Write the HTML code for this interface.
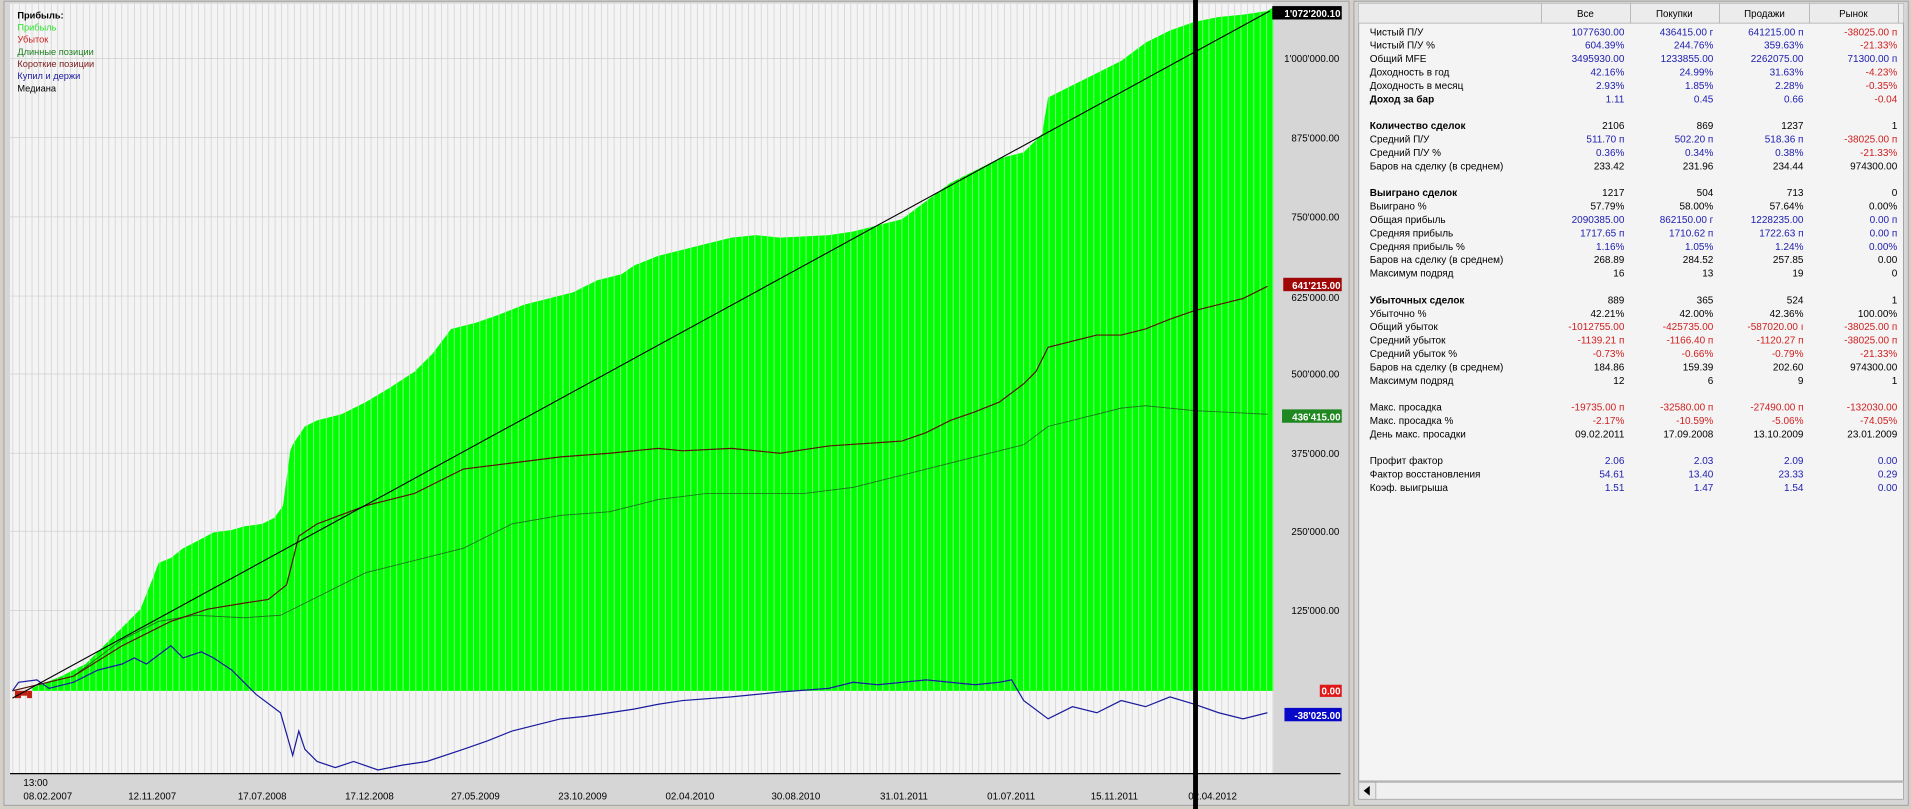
<!DOCTYPE html>
<html><head><meta charset="utf-8"><style>
html,body{margin:0;padding:0;background:#d4d0c8;overflow:hidden}
svg{display:block}
text{font-family:"Liberation Sans","DejaVu Sans",sans-serif}
</style></head><body>
<svg width="1911" height="809" viewBox="0 0 1568 664" xmlns="http://www.w3.org/2000/svg">
<defs>
<pattern id="gv" x="10" y="0" width="5.25" height="10" patternUnits="userSpaceOnUse"><rect x="0" y="0" width="0.6" height="10" fill="#d0d0d0"/></pattern>
<pattern id="wv" x="10" y="0" width="5.25" height="10" patternUnits="userSpaceOnUse"><rect x="0" y="0" width="0.6" height="10" fill="#b0ffb0"/></pattern>
<clipPath id="pc"><rect x="8" y="3" width="1037" height="632"/></clipPath>
</defs>
<rect x="0" y="0" width="1568" height="664" fill="#d4d0c8"/>
<rect x="3" y="1" width="1104" height="660" fill="#d6d6d6" stroke="#a0a0a0" stroke-width="0.8"/>
<rect x="8" y="3" width="1037" height="632" fill="#f4f4f4"/>
<rect x="8" y="3" width="1037" height="632" fill="url(#gv)"/>
<g stroke="#d0d0d0" stroke-width="0.6">
<line x1="8" y1="48" x2="1045" y2="48"/><line x1="8" y1="113" x2="1045" y2="113"/><line x1="8" y1="178" x2="1045" y2="178"/><line x1="8" y1="243" x2="1045" y2="243"/><line x1="8" y1="307" x2="1045" y2="307"/><line x1="8" y1="372" x2="1045" y2="372"/><line x1="8" y1="436" x2="1045" y2="436"/><line x1="8" y1="501" x2="1045" y2="501"/>
</g>
<g clip-path="url(#pc)">
<polygon fill="#00ff00" points="26,567 26,565 30,563 50,555 70,545 85,530 100,515 115,500 125,475 130,462 140,458 150,450 160,445 175,437 190,435 200,432 215,430 225,425 232,415 238,370 240,365 250,350 260,345 280,340 300,330 320,318 340,305 355,290 370,270 390,265 410,258 430,250 450,245 470,240 490,230 510,225 520,218 540,210 560,205 580,200 600,195 620,193 640,195 660,194 680,193 700,190 720,185 740,180 760,165 780,150 800,140 820,130 840,125 855,110 860,80 880,70 900,60 920,50 940,35 960,25 980,18 1000,14 1020,12 1040,9 1045,6 1045,567"/>
<polygon fill="url(#wv)" points="26,567 26,565 30,563 50,555 70,545 85,530 100,515 115,500 125,475 130,462 140,458 150,450 160,445 175,437 190,435 200,432 215,430 225,425 232,415 238,370 240,365 250,350 260,345 280,340 300,330 320,318 340,305 355,290 370,270 390,265 410,258 430,250 450,245 470,240 490,230 510,225 520,218 540,210 560,205 580,200 600,195 620,193 640,195 660,194 680,193 700,190 720,185 740,180 760,165 780,150 800,140 820,130 840,125 855,110 860,80 880,70 900,60 920,50 940,35 960,25 980,18 1000,14 1020,12 1040,9 1045,6 1045,567"/>
<rect x="12" y="567" width="5" height="6" fill="#c02010"/><rect x="17" y="567" width="5" height="4" fill="#c02010"/><rect x="22" y="567" width="4" height="6" fill="#c02010"/>
<polyline fill="none" stroke="#1f7a1f" stroke-width="0.8" points="10,567 60,555 100,525 130,510 160,505 200,507 230,505 260,490 300,470 340,460 380,450 400,440 420,430 460,423 500,420 540,410 580,405 620,405 660,405 700,400 740,390 780,380 800,375 840,365 860,350 880,345 900,340 920,335 940,333 980,337 1000,338 1040,340"/>
<polyline fill="none" stroke="#5a1408" stroke-width="1" points="10,567 60,555 100,530 120,520 140,510 170,500 200,495 220,492 235,480 245,440 260,430 300,415 340,405 360,395 380,385 420,380 460,375 500,372 540,368 560,370 600,368 640,372 680,366 740,362 760,355 780,345 800,338 820,330 840,315 850,305 860,285 880,280 900,275 920,275 940,270 960,262 980,255 1000,250 1020,245 1040,235"/>
<polyline fill="none" stroke="#1a1aa0" stroke-width="1" points="10,567 15,560 30,558 40,565 60,560 80,550 100,545 110,540 120,545 140,530 150,540 165,535 175,540 190,550 200,560 210,570 230,585 240,620 245,600 250,615 260,625 275,630 290,625 310,632 330,628 350,625 380,615 400,608 420,600 440,595 460,590 480,588 500,585 520,582 540,578 560,575 600,572 640,568 680,565 700,560 720,562 760,558 800,562 820,560 830,558 840,575 860,590 880,580 900,585 920,575 940,580 960,572 980,578 1000,585 1020,590 1040,585"/>
<line x1="10" y1="573" x2="1042" y2="9" stroke="#000" stroke-width="0.9"/>
</g>
<line x1="8" y1="635" x2="1100" y2="635" stroke="#000" stroke-width="1"/>
<rect x="979" y="0" width="4" height="664" fill="#000"/>
<g font-size="7.6">
<text x="14" y="15" font-weight="bold" fill="#000">Прибыль:</text>
<text x="14" y="25" fill="#30e030">Прибыль</text>
<text x="14" y="35" fill="#d02020">Убыток</text>
<text x="14" y="45" fill="#208020">Длинные позиции</text>
<text x="14" y="55" fill="#802020">Короткие позиции</text>
<text x="14" y="65" fill="#2020a0">Купил и держи</text>
<text x="14" y="75" fill="#000">Медиана</text>
</g>
<g font-size="8" fill="#000" text-anchor="end">
<text x="1099" y="51">1'000'000.00</text>
<text x="1099" y="116">875'000.00</text>
<text x="1099" y="181">750'000.00</text>
<text x="1099" y="247">625'000.00</text>
<text x="1099" y="310">500'000.00</text>
<text x="1099" y="375">375'000.00</text>
<text x="1099" y="439">250'000.00</text>
<text x="1099" y="504">125'000.00</text>
</g>
<rect x="1044" y="5" width="57" height="11" fill="#000"/>
<rect x="1053" y="228" width="48" height="11" fill="#a00808"/>
<rect x="1052" y="336" width="49" height="11" fill="#208820"/>
<rect x="1083" y="562" width="18" height="10" fill="#e01818"/>
<rect x="1054" y="581" width="47" height="11" fill="#0808c8"/>
<g font-size="8" fill="#fff" text-anchor="end" font-weight="bold">
<text x="1100" y="14">1'072'200.10</text>
<text x="1100" y="237">641'215.00</text>
<text x="1100" y="345">436'415.00</text>
<text x="1100" y="570">0.00</text>
<text x="1100" y="590">-38'025.00</text>
</g>
<g font-size="8" fill="#000">
<text x="19" y="645">13:00</text>
<text x="19" y="656">08.02.2007</text>
<text x="105" y="656">12.11.2007</text>
<text x="195" y="656">17.07.2008</text>
<text x="283" y="656">17.12.2008</text>
<text x="370" y="656">27.05.2009</text>
<text x="458" y="656">23.10.2009</text>
<text x="546" y="656">02.04.2010</text>
<text x="633" y="656">30.08.2010</text>
<text x="722" y="656">31.01.2011</text>
<text x="810" y="656">01.07.2011</text>
<text x="895" y="656">15.11.2011</text>
<text x="975" y="656">02.04.2012</text>
</g>
<rect x="1111" y="1" width="455" height="660" fill="#d6d6d6" stroke="#a0a0a0" stroke-width="0.8"/>
<rect x="1115" y="3" width="447" height="638" fill="#f4f4f4" stroke="#909090" stroke-width="0.6"/>
<rect x="1115" y="3" width="447" height="16" fill="#ececec"/>
<g stroke="#a8a8a8" stroke-width="0.6">
<line x1="1115" y1="19" x2="1562" y2="19"/>
<line x1="1265" y1="3" x2="1265" y2="19"/><line x1="1338" y1="3" x2="1338" y2="19"/><line x1="1411" y1="3" x2="1411" y2="19"/><line x1="1485" y1="3" x2="1485" y2="19"/><line x1="1558" y1="3" x2="1558" y2="19"/>
</g>
<g font-size="8" fill="#000" text-anchor="middle">
<text x="1301" y="14">Все</text><text x="1374" y="14">Покупки</text><text x="1448" y="14">Продажи</text><text x="1521" y="14">Рынок</text>
</g>
<rect x="1115" y="642" width="447" height="14" fill="#f0f0f0" stroke="#a0a0a0" stroke-width="0.6"/>
<rect x="1115" y="642" width="14" height="14" fill="#e8e8e8" stroke="#a0a0a0" stroke-width="0.6"/>
<polygon points="1119,649 1124,645 1124,653" fill="#000"/>
<g font-size="8.2" fill="#000">
<text x="1124" y="29">Чистый П/У</text>
<text x="1124" y="40">Чистый П/У %</text>
<text x="1124" y="51">Общий MFE</text>
<text x="1124" y="62">Доходность в год</text>
<text x="1124" y="73">Доходность в месяц</text>
<text x="1124" y="84" font-weight="bold">Доход за бар</text>
<text x="1124" y="106" font-weight="bold">Количество сделок</text>
<text x="1124" y="117">Средний П/У</text>
<text x="1124" y="128">Средний П/У %</text>
<text x="1124" y="139">Баров на сделку (в среднем)</text>
<text x="1124" y="161" font-weight="bold">Выиграно сделок</text>
<text x="1124" y="172">Выиграно %</text>
<text x="1124" y="183">Общая прибыль</text>
<text x="1124" y="194">Средняя прибыль</text>
<text x="1124" y="205">Средняя прибыль %</text>
<text x="1124" y="216">Баров на сделку (в среднем)</text>
<text x="1124" y="227">Максимум подряд</text>
<text x="1124" y="249" font-weight="bold">Убыточных сделок</text>
<text x="1124" y="260">Убыточно %</text>
<text x="1124" y="271">Общий убыток</text>
<text x="1124" y="282">Средний убыток</text>
<text x="1124" y="293">Средний убыток %</text>
<text x="1124" y="304">Баров на сделку (в среднем)</text>
<text x="1124" y="315">Максимум подряд</text>
<text x="1124" y="337">Макс. просадка</text>
<text x="1124" y="348">Макс. просадка %</text>
<text x="1124" y="359">День макс. просадки</text>
<text x="1124" y="381">Профит фактор</text>
<text x="1124" y="392">Фактор восстановления</text>
<text x="1124" y="403">Коэф. выигрыша</text>
</g>
<g font-size="8.2" text-anchor="end">
<g fill="#2020b0">
<text x="1333" y="29">1077630.00</text><text x="1333" y="40">604.39%</text><text x="1333" y="51">3495930.00</text><text x="1333" y="62">42.16%</text><text x="1333" y="73">2.93%</text><text x="1333" y="84">1.11</text>
<text x="1333" y="117">511.70 п</text><text x="1333" y="128">0.36%</text>
<text x="1333" y="183">2090385.00</text><text x="1333" y="194">1717.65 п</text><text x="1333" y="205">1.16%</text>
<text x="1333" y="381">2.06</text><text x="1333" y="392">54.61</text><text x="1333" y="403">1.51</text>
<text x="1406" y="29">436415.00 г</text><text x="1406" y="40">244.76%</text><text x="1406" y="51">1233855.00</text><text x="1406" y="62">24.99%</text><text x="1406" y="73">1.85%</text><text x="1406" y="84">0.45</text>
<text x="1406" y="117">502.20 п</text><text x="1406" y="128">0.34%</text>
<text x="1406" y="183">862150.00 г</text><text x="1406" y="194">1710.62 п</text><text x="1406" y="205">1.05%</text>
<text x="1406" y="381">2.03</text><text x="1406" y="392">13.40</text><text x="1406" y="403">1.47</text>
<text x="1480" y="29">641215.00 п</text><text x="1480" y="40">359.63%</text><text x="1480" y="51">2262075.00</text><text x="1480" y="62">31.63%</text><text x="1480" y="73">2.28%</text><text x="1480" y="84">0.66</text>
<text x="1480" y="117">518.36 п</text><text x="1480" y="128">0.38%</text>
<text x="1480" y="183">1228235.00</text><text x="1480" y="194">1722.63 п</text><text x="1480" y="205">1.24%</text>
<text x="1480" y="381">2.09</text><text x="1480" y="392">23.33</text><text x="1480" y="403">1.54</text>
<text x="1557" y="51">71300.00 п</text>
<text x="1557" y="183">0.00 п</text><text x="1557" y="194">0.00 п</text><text x="1557" y="205">0.00%</text>
<text x="1557" y="381">0.00</text><text x="1557" y="392">0.29</text><text x="1557" y="403">0.00</text>
</g>
<g fill="#000">
<text x="1333" y="106">2106</text><text x="1333" y="139">233.42</text><text x="1333" y="161">1217</text><text x="1333" y="172">57.79%</text><text x="1333" y="216">268.89</text><text x="1333" y="227">16</text><text x="1333" y="249">889</text><text x="1333" y="260">42.21%</text><text x="1333" y="304">184.86</text><text x="1333" y="315">12</text><text x="1333" y="359">09.02.2011</text>
<text x="1406" y="106">869</text><text x="1406" y="139">231.96</text><text x="1406" y="161">504</text><text x="1406" y="172">58.00%</text><text x="1406" y="216">284.52</text><text x="1406" y="227">13</text><text x="1406" y="249">365</text><text x="1406" y="260">42.00%</text><text x="1406" y="304">159.39</text><text x="1406" y="315">6</text><text x="1406" y="359">17.09.2008</text>
<text x="1480" y="106">1237</text><text x="1480" y="139">234.44</text><text x="1480" y="161">713</text><text x="1480" y="172">57.64%</text><text x="1480" y="216">257.85</text><text x="1480" y="227">19</text><text x="1480" y="249">524</text><text x="1480" y="260">42.36%</text><text x="1480" y="304">202.60</text><text x="1480" y="315">9</text><text x="1480" y="359">13.10.2009</text>
<text x="1557" y="106">1</text><text x="1557" y="139">974300.00</text><text x="1557" y="161">0</text><text x="1557" y="172">0.00%</text><text x="1557" y="216">0.00</text><text x="1557" y="227">0</text><text x="1557" y="249">1</text><text x="1557" y="260">100.00%</text><text x="1557" y="304">974300.00</text><text x="1557" y="315">1</text><text x="1557" y="359">23.01.2009</text>
</g>
<g fill="#d02020">
<text x="1557" y="29">-38025.00 п</text><text x="1557" y="40">-21.33%</text><text x="1557" y="62">-4.23%</text><text x="1557" y="73">-0.35%</text><text x="1557" y="84">-0.04</text>
<text x="1557" y="117">-38025.00 п</text><text x="1557" y="128">-21.33%</text>
<text x="1333" y="271">-1012755.00</text><text x="1333" y="282">-1139.21 п</text><text x="1333" y="293">-0.73%</text><text x="1333" y="337">-19735.00 п</text><text x="1333" y="348">-2.17%</text>
<text x="1406" y="271">-425735.00</text><text x="1406" y="282">-1166.40 п</text><text x="1406" y="293">-0.66%</text><text x="1406" y="337">-32580.00 п</text><text x="1406" y="348">-10.59%</text>
<text x="1480" y="271">-587020.00 ı</text><text x="1480" y="282">-1120.27 п</text><text x="1480" y="293">-0.79%</text><text x="1480" y="337">-27490.00 п</text><text x="1480" y="348">-5.06%</text>
<text x="1557" y="271">-38025.00 п</text><text x="1557" y="282">-38025.00 п</text><text x="1557" y="293">-21.33%</text><text x="1557" y="337">-132030.00</text><text x="1557" y="348">-74.05%</text>
</g>
</g>
</svg>
</body></html>
